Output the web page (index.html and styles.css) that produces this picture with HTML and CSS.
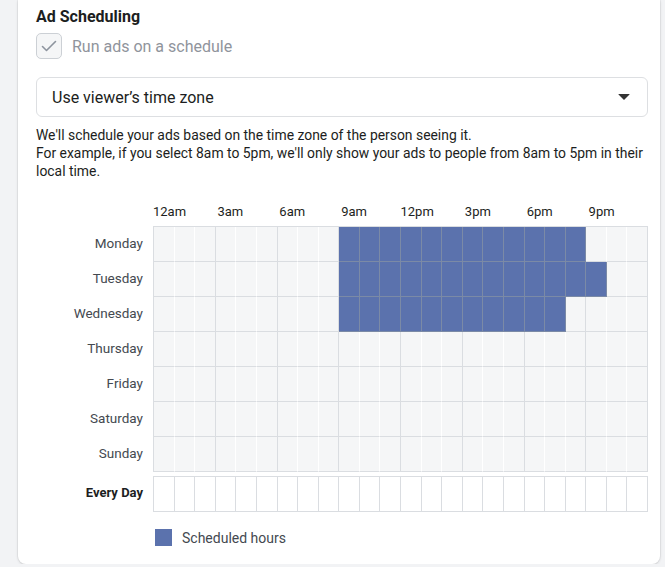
FILE: index.html
```html
<!DOCTYPE html>
<html lang="en">
<head>
  <meta charset="UTF-8" />
  <meta name="viewport" content="width=device-width, initial-scale=1.0"/>
  <title>Ad Scheduling</title>
  <link rel="stylesheet" href="styles.css">
</head>
<body>

  <div class="card">
    <h2 class="title">Ad Scheduling</h2>

    <label class="check-row">
      <span class="checkbox">
        <svg width="16" height="12" viewBox="0 0 16 12">
          <path d="M1.5 6.5 L5.5 10.5 L14.5 1.5" fill="none" stroke="#8d949e" stroke-width="1.6" stroke-linecap="round" stroke-linejoin="round"/>
        </svg>
      </span>
      <span class="check-label">Run ads on a schedule</span>
    </label>

    <div class="select">
      <span>Use viewer’s time zone</span>
      <span class="arrow"></span>
    </div>

    <p class="desc">
      We'll schedule your ads based on the time zone of the person seeing it.<br>
      For example, if you select 8am to 5pm, we'll only show your ads to people from 8am to 5pm in their local time.
    </p>

    <div class="schedule">
      <div class="hour-labels">
        <span>12am</span><span>3am</span><span>6am</span><span>9am</span>
        <span>12pm</span><span>3pm</span><span>6pm</span><span>9pm</span>
      </div>
      <div class="day-rows" id="dayRows"></div>
      <div class="row every-row">
        <div class="day-name every">Every Day</div>
        <div class="hours every-hours" id="everyDay"></div>
      </div>
    </div>

    <div class="legend">
      <span class="swatch"></span>
      <span>Scheduled hours</span>
    </div>
  </div>

  <script>
    const days = [
      ['Monday', 9, 21],
      ['Tuesday', 9, 22],
      ['Wednesday', 9, 20],
      ['Thursday', 0, 0],
      ['Friday', 0, 0],
      ['Saturday', 0, 0],
      ['Sunday', 0, 0]
    ];

    const rows = document.getElementById('dayRows');
    days.forEach(([name, from, to]) => {
      let cells = '';
      for (let h = 0; h < 24; h++) {
        cells += `<div class="cell${h >= from && h < to ? ' on' : ''}"></div>`;
      }
      rows.innerHTML += `<div class="row"><div class="day-name">${name}</div><div class="hours">${cells}</div></div>`;
    });

    let every = '';
    for (let h = 0; h < 24; h++) {
      every += '<div class="cell"></div>';
    }
    document.getElementById('everyDay').innerHTML = every;
  </script>

</body>
</html>
```

FILE: styles.css
```css
body {
  margin: 0;
  background-color: #f2f3f5;
  font-family: Roboto, "Liberation Sans", Arial, sans-serif;
  color: #1c1e21;
}

.card {
  margin-left: 18px;
  width: 642px;
  box-sizing: border-box;
  padding: 7px 12px 18px 18px;
  background-color: #fff;
  border-radius: 0 0 8px 8px;
  box-shadow: 0 0 0 1px rgba(0, 0, 0, 0.04), 0 1px 3px rgba(0, 0, 0, 0.12);
}

.title {
  margin: 0;
  font-size: 16px;
  font-weight: bold;
  line-height: 20px;
}

.check-row {
  display: flex;
  align-items: center;
  gap: 10px;
  margin-top: 6px;
}

.checkbox {
  width: 26px;
  height: 26px;
  box-sizing: border-box;
  border: 1px solid #ccd0d5;
  border-radius: 5px;
  background-color: #f5f6f7;
  display: flex;
  align-items: center;
  justify-content: center;
}

.check-label {
  font-size: 16px;
  color: #90949c;
}

.select {
  margin-top: 18px;
  height: 40px;
  box-sizing: border-box;
  border: 1px solid #dddfe2;
  border-radius: 6px;
  padding: 0 17px 0 15px;
  display: flex;
  align-items: center;
  justify-content: space-between;
  font-size: 16px;
}

.arrow {
  width: 0;
  height: 0;
  border-left: 6px solid transparent;
  border-right: 6px solid transparent;
  border-top: 6px solid #333;
  border-radius: 1px;
}

.desc {
  margin: 9px 0 0;
  font-size: 13.9px;
  line-height: 18px;
  color: #1c1e21;
}

.schedule {
  margin-top: 24px;
}

.hour-labels {
  margin-left: 117px;
  display: grid;
  grid-template-columns: repeat(8, 1fr);
  font-size: 13px;
  line-height: 16px;
  margin-bottom: 6px;
}

.hour-labels span {
  width: 50%;
  text-align: center;
}

.row {
  display: flex;
}

.day-name {
  width: 117px;
  box-sizing: border-box;
  padding: 0 10px 3px 0;
  text-align: right;
  font-size: 13.5px;
  color: #444950;
  display: flex;
  align-items: center;
  justify-content: flex-end;
}

.day-name.every {
  font-weight: bold;
  font-size: 13px;
  color: #1c1e21;
}

.day-rows .row:first-child .hours {
  border-top: 1px solid #dadde1;
}

.hours {
  flex: 1;
  display: grid;
  grid-template-columns: repeat(24, 1fr);
  border-left: 1px solid #dadde1;
}

.cell {
  height: 35px;
  box-sizing: border-box;
  background-color: #f5f6f7;
  border-right: 1px solid #fff;
  border-bottom: 1px solid #dadde1;
}

.cell:nth-child(3n) {
  border-right-color: #dadde1;
}

.cell.on {
  background-color: #5b72ad;
  border-right-color: #7b8aa6;
  border-bottom-color: #7b8aa6;
}

.every-row {
  margin-top: 4px;
}

.every-hours {
  border-top: 1px solid #dadde1;
}

.every-hours .cell {
  background-color: #fff;
  border-right-color: #dadde1;
}

.legend {
  margin-top: 17px;
  margin-left: 119px;
  display: flex;
  align-items: center;
  gap: 10px;
  font-size: 14px;
  color: #444950;
}

.swatch {
  width: 17px;
  height: 17px;
  background-color: #5b72ad;
}
```
